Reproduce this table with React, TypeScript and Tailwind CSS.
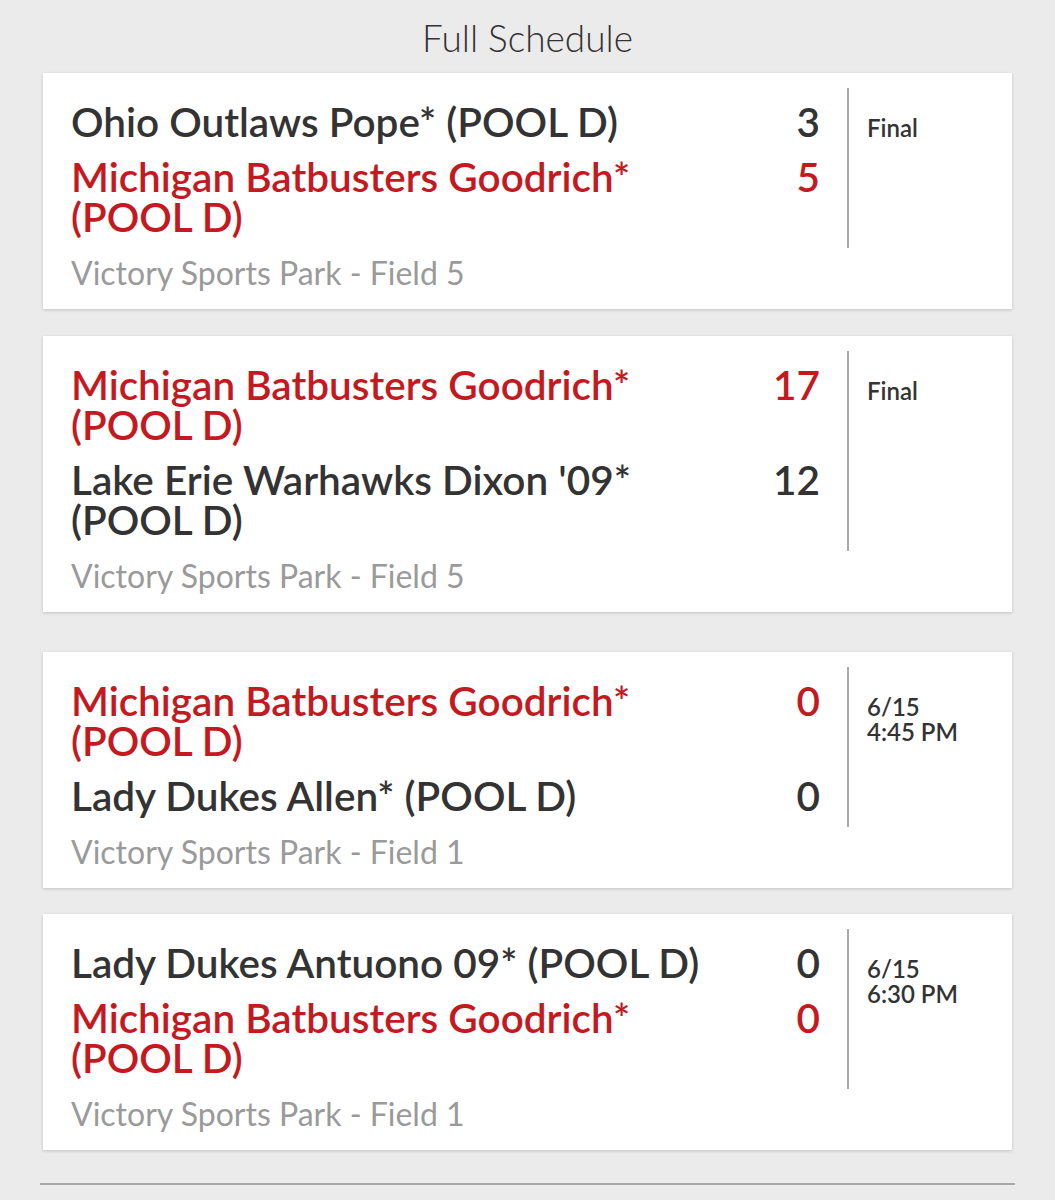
import React from "react";

type Team = { name: string; score: number; win?: boolean };
type Game = { teams: Team[]; status: string[]; venue: string; gap: string };

const games: Game[] = [
  {
    teams: [
      { name: "Ohio Outlaws Pope* (POOL\u00a0D)", score: 3 },
      { name: "Michigan Batbusters Goodrich* (POOL\u00a0D)", score: 5, win: true },
    ],
    status: ["Final"],
    venue: "Victory Sports Park - Field 5",
    gap: "mt-0",
  },
  {
    teams: [
      { name: "Michigan Batbusters Goodrich* (POOL\u00a0D)", score: 17, win: true },
      { name: "Lake Erie Warhawks Dixon '09* (POOL\u00a0D)", score: 12 },
    ],
    status: ["Final"],
    venue: "Victory Sports Park - Field 5",
    gap: "mt-[27px]",
  },
  {
    teams: [
      { name: "Michigan Batbusters Goodrich* (POOL\u00a0D)", score: 0, win: true },
      { name: "Lady Dukes Allen* (POOL\u00a0D)", score: 0 },
    ],
    status: ["6/15", "4:45 PM"],
    venue: "Victory Sports Park - Field 1",
    gap: "mt-[40px]",
  },
  {
    teams: [
      { name: "Lady Dukes Antuono 09* (POOL\u00a0D)", score: 0 },
      { name: "Michigan Batbusters Goodrich* (POOL\u00a0D)", score: 0, win: true },
    ],
    status: ["6/15", "6:30 PM"],
    venue: "Victory Sports Park - Field 1",
    gap: "mt-[26px]",
  },
];

const GameCard = ({ game }: { game: Game }) => {
  return (
    <div
      className={`${game.gap} bg-white pl-[28px] pr-[20px] pt-[15px] pb-[18px] shadow-[0_1px_3px_rgba(0,0,0,0.18)]`}
    >
      <div className="flex">
        {/* Teams and scores */}
        <div className="flex flex-1 flex-col gap-[15px] pt-[14px] pb-[11px] pr-[27px]">
          {game.teams.map((t, i) => (
            <div
              key={i}
              className={`flex text-[40.5px] leading-[40px] font-semibold ${
                t.win ? "text-[#c41a1f]" : "text-[#333333]"
              }`}
            >
              <div className="w-[660px]">{t.name}</div>
              <div className="flex-1 text-right">{t.score}</div>
            </div>
          ))}
        </div>
        {/* Status */}
        <div className="w-[145px] border-l-2 border-[#a9a9a9] pl-[18px] pt-[27px] text-[24px] leading-[25px] font-semibold text-[#333333]">
          {game.status.map((s, i) => (
            <div key={i}>{s}</div>
          ))}
        </div>
      </div>
      <div className="mt-[7px] text-[32px] leading-[36px] text-[#9a9a9a]">
        {game.venue}
      </div>
    </div>
  );
};

export default function App() {
  return (
    <div
      className="min-h-[1200px] bg-[#ebebeb] px-[43px] pt-[18px]"
      style={{ fontFamily: "Lato, 'Open Sans', sans-serif" }}
    >
      <h1 className="mb-[15px] text-center text-[37px] leading-[40px] font-light text-[#333333]">
        Full Schedule
      </h1>
      {games.map((g, i) => (
        <GameCard key={i} game={g} />
      ))}
      <div className="-mx-[3px] mt-[33px] h-[2px] bg-[#a8a8a8]" />
    </div>
  );
}
